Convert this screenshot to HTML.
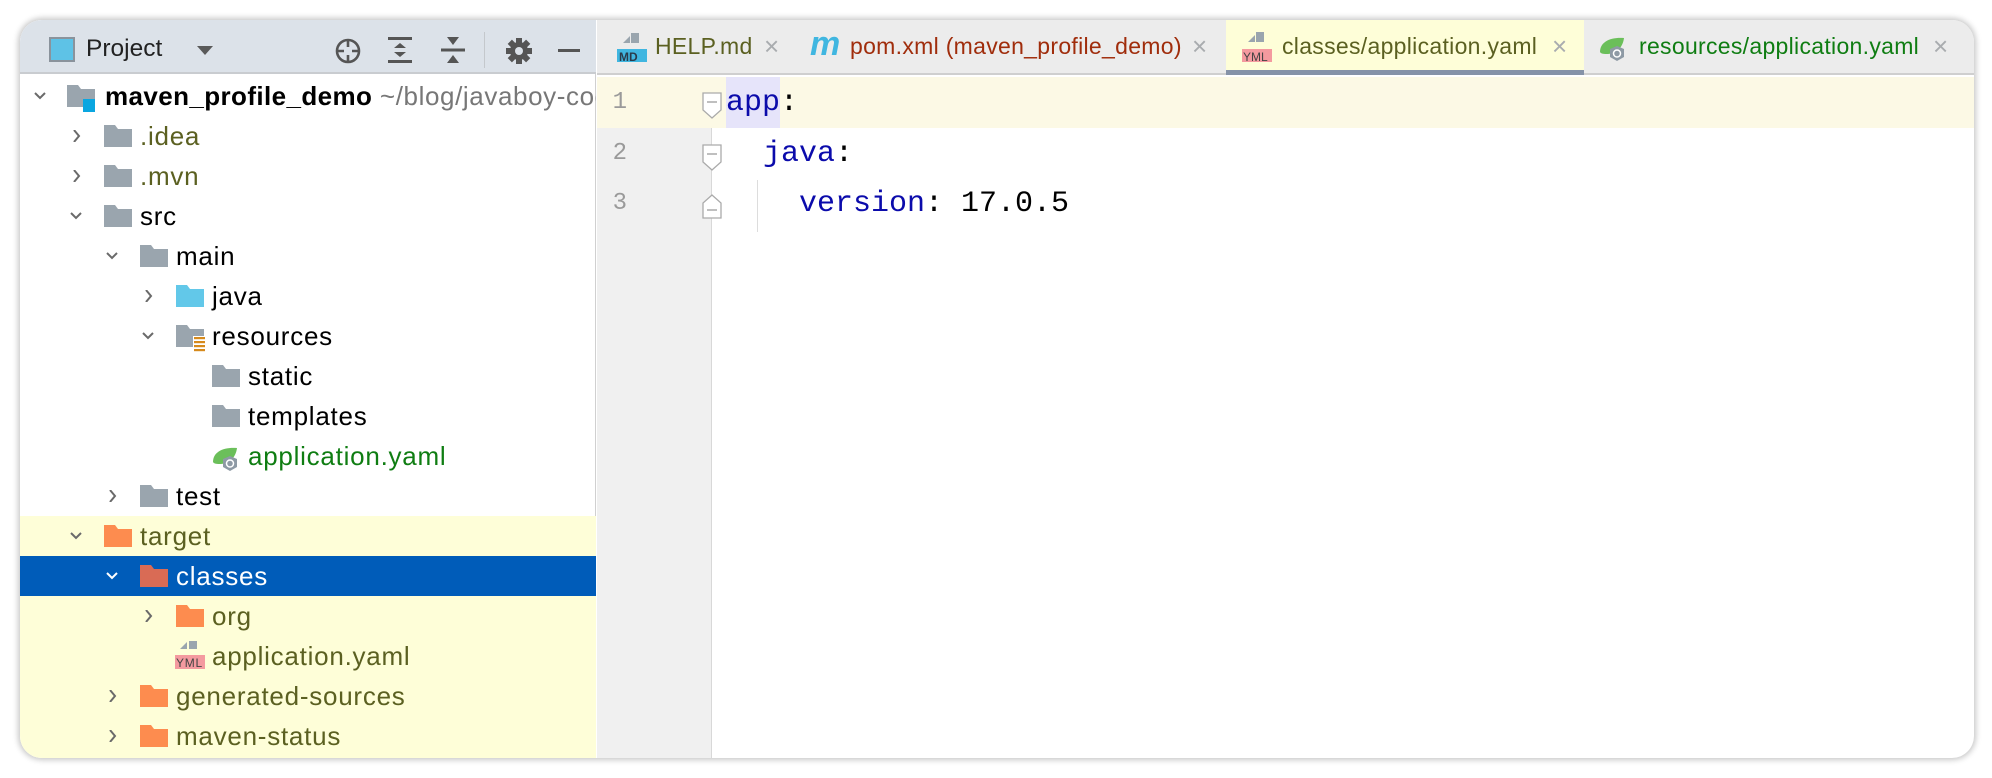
<!DOCTYPE html>
<html><head><meta charset="utf-8"><style>
*{margin:0;padding:0;box-sizing:border-box}
body{width:1992px;height:778px;background:#fff;position:relative;overflow:hidden;font-family:"Liberation Sans",sans-serif}
.win{position:absolute;left:20px;top:20px;width:1954px;height:738px;border-radius:22px;overflow:hidden;background:#fff;box-shadow:0 0 6px 2px rgba(0,0,0,.22)}
.a{position:absolute}
.row{position:absolute;left:0;width:576px;height:40px;font-size:26px;letter-spacing:0.75px;line-height:40px;white-space:nowrap;color:#000;overflow:hidden}
.row>*{position:absolute}
.chev{width:12px;height:12px;top:14px}
.ic{top:9px}
.tx{top:0}
.ol{color:#5b6021}
.tab{position:absolute;top:0;height:55px;line-height:52px;font-size:23px;letter-spacing:0.3px;white-space:nowrap}
.x{color:#a9acaf;font-size:26px;letter-spacing:0}
.code{font-family:"Liberation Mono","DejaVu Sans Mono",monospace;font-size:30px;position:absolute;line-height:52px}
.ln{position:absolute;left:0;width:30px;text-align:right;font-family:"Liberation Mono",monospace;font-size:24px;color:#9a9a9a;line-height:52px}
</style></head><body>
<div class="win">
<div class="a" style="left:0;top:0;width:576px;height:738px;background:#fff;border-right:1px solid #d0d0d0"></div>
<div class="a" style="left:0;top:0;width:576px;height:54px;background:#dce2e9;border-bottom:2px solid #c9ccd0"></div>
<div class="a" style="left:0;top:496px;width:576px;height:242px;background:#fefed8"></div>
<div class="a" style="left:0;top:536px;width:576px;height:40px;background:#005cb9"></div>
<svg class="a" style="left:29px;top:17px" width="26" height="25"><rect x="1" y="1" width="24" height="23" fill="#5ec2e6" stroke="#8a939c" stroke-width="2"/></svg>
<div class="a" style="left:66px;top:12px;font-size:24.5px;line-height:34px;color:#222">Project</div>
<svg class="a" style="left:177px;top:26px" width="16" height="10"><path d="M0 0h16L8 9z" fill="#5a5a5a"/></svg>
<svg class="a" style="left:314px;top:17px" width="28" height="28" fill="none" stroke="#555" stroke-width="2.6"><circle cx="14" cy="14" r="11"/><path d="M14 3v7M14 18v7M3 14h7M18 14h7"/></svg>
<svg class="a" style="left:368px;top:17px" width="24" height="26"><rect x="0" y="0" width="24" height="3" fill="#555"/><rect x="0" y="23" width="24" height="3" fill="#555"/><path d="M6 11l6-5 6 5zM6 15l6 5 6-5z" fill="#555"/></svg>
<svg class="a" style="left:421px;top:17px" width="24" height="26"><rect x="0" y="11.5" width="24" height="3" fill="#555"/><path d="M6 0l6 8 6-8zM6 26l6-8 6 8z" fill="#555"/></svg>
<div class="a" style="left:464px;top:12px;width:1px;height:36px;background:#c4c8cc"></div>
<svg class="a" style="left:485px;top:17px" width="28" height="28"><g fill="#555"><circle cx="14" cy="14" r="9"/><rect x="11" y="1" width="6" height="26"/><rect x="1" y="11" width="26" height="6"/><rect x="11" y="1" width="6" height="26" transform="rotate(45 14 14)"/><rect x="11" y="1" width="6" height="26" transform="rotate(-45 14 14)"/></g><circle cx="14" cy="14" r="4" fill="#dce2e9"/></svg>
<div class="a" style="left:538px;top:29px;width:22px;height:3px;background:#555"></div>

<svg width="0" height="0" style="position:absolute"><defs>
<path id="fd" d="M0 0h11l3 4h14v18H0z"/>
<path id="ch" d="M1 3l5 5 5-5" fill="none" stroke="#6a6a6a" stroke-width="2"/>
<path id="cr" d="M3 0l5 6-5 6" fill="none" stroke="#6a6a6a" stroke-width="2"/>
</defs></svg>

<div class="row" style="top:56px"><svg class="chev" style="left:14px" width="12" height="12"><use href="#ch"/></svg><svg class="ic" style="left:47px" width="32" height="28"><use href="#fd" fill="#9aa5ae"/><rect x="16" y="14" width="12" height="13" fill="#0aa6e0"/></svg><span class="tx" style="left:85px;font-weight:bold;font-size:26px;letter-spacing:0.4px">maven_profile_demo <span style="font-weight:normal;color:#777;font-size:26px;letter-spacing:0.6px">~/blog/javaboy-code-samples</span></span></div>
<div class="row" style="top:96px"><svg class="chev" style="left:51px" width="12" height="12"><use href="#cr"/></svg><svg class="ic" style="left:84px" width="28" height="22"><use href="#fd" fill="#9aa5ae"/></svg><span class="tx ol" style="left:120px">.idea</span></div>
<div class="row" style="top:136px"><svg class="chev" style="left:51px" width="12" height="12"><use href="#cr"/></svg><svg class="ic" style="left:84px" width="28" height="22"><use href="#fd" fill="#9aa5ae"/></svg><span class="tx ol" style="left:120px">.mvn</span></div>
<div class="row" style="top:176px"><svg class="chev" style="left:50px" width="12" height="12"><use href="#ch"/></svg><svg class="ic" style="left:84px" width="28" height="22"><use href="#fd" fill="#9aa5ae"/></svg><span class="tx" style="left:120px">src</span></div>
<div class="row" style="top:216px"><svg class="chev" style="left:86px" width="12" height="12"><use href="#ch"/></svg><svg class="ic" style="left:120px" width="28" height="22"><use href="#fd" fill="#9aa5ae"/></svg><span class="tx" style="left:156px">main</span></div>
<div class="row" style="top:256px"><svg class="chev" style="left:123px" width="12" height="12"><use href="#cr"/></svg><svg class="ic" style="left:156px" width="28" height="22"><use href="#fd" fill="#62c8e9"/></svg><span class="tx" style="left:192px">java</span></div>
<div class="row" style="top:296px"><svg class="chev" style="left:122px" width="12" height="12"><use href="#ch"/></svg><svg class="ic" style="left:156px" width="32" height="28"><use href="#fd" fill="#9aa5ae"/><rect x="17" y="11" width="13" height="15" fill="#fff"/><g fill="#d68a1c"><rect x="18" y="12" width="11" height="2.2"/><rect x="18" y="16" width="11" height="2.2"/><rect x="18" y="20" width="11" height="2.2"/><rect x="18" y="24" width="11" height="2.2"/></g></svg><span class="tx" style="left:192px">resources</span></div>
<div class="row" style="top:336px"><svg class="ic" style="left:192px" width="28" height="22"><use href="#fd" fill="#9aa5ae"/></svg><span class="tx" style="left:228px">static</span></div>
<div class="row" style="top:376px"><svg class="ic" style="left:192px" width="28" height="22"><use href="#fd" fill="#9aa5ae"/></svg><span class="tx" style="left:228px">templates</span></div>
<div class="row" style="top:416px"><svg class="ic" style="left:191px;top:6px" width="32" height="30"><path d="M2 20C2 10 12 5 26 6C25 14 20 21 10 22C6 22 3 22 2 20z" fill="#6bbf5a"/><polygon points="19,14 26,17 26,25 19,29 12,25 12,17" fill="#8e9aa5"/><circle cx="19" cy="21.5" r="3.5" fill="none" stroke="#fff" stroke-width="1.5"/></svg><span class="tx" style="left:228px;color:#0f7d12">application.yaml</span></div>
<div class="row" style="top:456px"><svg class="chev" style="left:87px" width="12" height="12"><use href="#cr"/></svg><svg class="ic" style="left:120px" width="28" height="22"><use href="#fd" fill="#9aa5ae"/></svg><span class="tx" style="left:156px">test</span></div>
<div class="row" style="top:496px"><svg class="chev" style="left:50px" width="12" height="12"><use href="#ch"/></svg><svg class="ic" style="left:84px" width="28" height="22"><use href="#fd" fill="#fd8c4f"/></svg><span class="tx ol" style="left:120px">target</span></div>
<div class="row" style="top:536px"><svg class="chev" style="left:86px" width="12" height="12"><path d="M1 3l5 5 5-5" fill="none" stroke="#fff" stroke-width="2"/></svg><svg class="ic" style="left:120px" width="28" height="22"><use href="#fd" fill="#d96b55"/></svg><span class="tx" style="left:156px;color:#fff">classes</span></div>
<div class="row" style="top:576px"><svg class="chev" style="left:123px" width="12" height="12"><use href="#cr"/></svg><svg class="ic" style="left:156px" width="28" height="22"><use href="#fd" fill="#fd8c4f"/></svg><span class="tx ol" style="left:192px">org</span></div>
<div class="row" style="top:616px"><svg class="ic" style="left:155px;top:3px" width="32" height="32"><path d="M14 2v8h8V2z" fill="#9aa5ae"/><path d="M5 10l7-7v7z" fill="#9aa5ae"/><rect x="0" y="16" width="30" height="14" fill="#f49a9f"/><text x="1" y="28" font-family="Liberation Sans" font-size="12" fill="#444">YML</text></svg><span class="tx ol" style="left:192px">application.yaml</span></div>
<div class="row" style="top:656px"><svg class="chev" style="left:87px" width="12" height="12"><use href="#cr"/></svg><svg class="ic" style="left:120px" width="28" height="22"><use href="#fd" fill="#fd8c4f"/></svg><span class="tx ol" style="left:156px">generated-sources</span></div>
<div class="row" style="top:696px"><svg class="chev" style="left:87px" width="12" height="12"><use href="#cr"/></svg><svg class="ic" style="left:120px" width="28" height="22"><use href="#fd" fill="#fd8c4f"/></svg><span class="tx ol" style="left:156px">maven-status</span></div>

<!-- editor -->
<div class="a" style="left:577px;top:0;width:1378px;height:55px;background:#ececec;border-bottom:2px solid #cfcfcf"></div>
<div class="a" style="left:1206px;top:0;width:358px;height:55px;background:#fefed8"></div>
<div class="a" style="left:1206px;top:50px;width:358px;height:5px;background:#8592a8"></div>
<svg class="a" style="left:597px;top:13px" width="30" height="30"><path d="M14 0v10h8V0z" fill="#9aa5ae"/><path d="M6 10l7-7v7z" fill="#9aa5ae"/><rect x="0" y="16" width="30" height="13" fill="#40b6e0"/><text x="2" y="28" font-family="Liberation Sans" font-size="12" font-weight="bold" fill="#2a3a4a">MD</text></svg>
<div class="tab" style="left:635px;color:#5b6021">HELP.md</div>
<div class="tab x" style="left:744px">×</div>
<div class="tab" style="left:790px;color:#40b6e0;font-size:34px;font-weight:bold;font-style:italic;line-height:48px">m</div>
<div class="tab" style="left:830px;color:#a02d0c">pom.xml (maven_profile_demo)</div>
<div class="tab x" style="left:1172px">×</div>
<svg class="a" style="left:1222px;top:12px" width="32" height="32"><path d="M14 0v10h8V0z" fill="#9aa5ae"/><path d="M6 10l7-7v7z" fill="#9aa5ae"/><rect x="0" y="17" width="30" height="13" fill="#f49a9f"/><text x="1" y="29" font-family="Liberation Sans" font-size="12" fill="#444">YML</text></svg>
<div class="tab" style="left:1262px;color:#5b6021">classes/application.yaml</div>
<div class="tab x" style="left:1532px">×</div>
<svg class="a" style="left:1578px;top:12px" width="32" height="30"><path d="M2 20C2 10 12 5 26 6C25 14 20 21 10 22C6 22 3 22 2 20z" fill="#6bbf5a"/><polygon points="19,14 26,17 26,25 19,29 12,25 12,17" fill="#8e9aa5"/><circle cx="19" cy="21.5" r="3.5" fill="none" stroke="#fff" stroke-width="1.5"/></svg>
<div class="tab" style="left:1619px;color:#0f7d12">resources/application.yaml</div>
<div class="tab x" style="left:1913px">×</div>

<div class="a" style="left:577px;top:57px;width:115px;height:681px;background:#f0f0f0;border-right:1px solid #d8d8d8"></div>
<div class="a" style="left:577px;top:57px;width:1378px;height:51px;background:#fcf9e5"></div>
<div class="ln" style="left:577px;top:57px">1</div>
<div class="ln" style="left:577px;top:108px">2</div>
<div class="ln" style="left:577px;top:158px">3</div>
<svg class="a" style="left:681px;top:0" width="24" height="220" fill="#fff" stroke="#aaa" stroke-width="1.3"><path d="M2 73h18v17l-9 8l-9-8z"/><path d="M2 125h18v17l-9 8l-9-8z"/><path d="M2 198h18v-15l-9-8l-9 8z"/><path d="M6 82h10M6 134h10M6 190h10" stroke="#999"/></svg>
<div class="a" style="left:706px;top:57px;width:54px;height:51px;background:#e6e4fa"></div>
<div class="code" style="left:706px;top:57px;color:#0b0bab">app<span style="color:#000">:</span></div>
<div class="code" style="left:743px;top:108px;color:#0b0bab">java<span style="color:#000">:</span></div>
<div class="code" style="left:779px;top:158px;color:#0b0bab">version<span style="color:#000">: 17.0.5</span></div>
<div class="a" style="left:737px;top:160px;width:1px;height:52px;background:#ddd"></div>
</div>
</body></html>
